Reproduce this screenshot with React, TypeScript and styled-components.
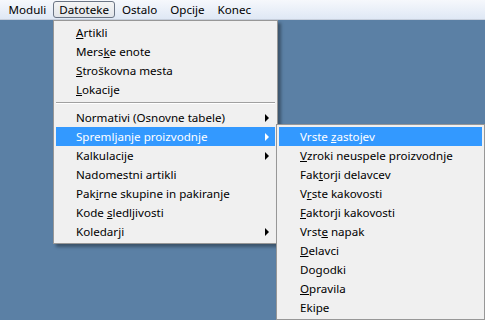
import React from 'react';
import styled, { createGlobalStyle } from 'styled-components';

const GlobalStyle = createGlobalStyle`
  html, body {
    margin: 0;
    padding: 0;
    width: 485px;
    height: 320px;
    overflow: hidden;
    background: #5b80a5;
  }
  * {
    box-sizing: border-box;
  }
`;

interface Item {
  label: string;
  key?: number;
  sub?: boolean;
  active?: boolean;
}

const mainItems: (Item | 'sep')[] = [
  { label: 'Artikli', key: 0 },
  { label: 'Merske enote', key: 4 },
  { label: 'Stroškovna mesta', key: 0 },
  { label: 'Lokacije', key: 0 },
  'sep',
  { label: 'Normativi (Osnovne tabele)', sub: true },
  { label: 'Spremljanje proizvodnje', sub: true, active: true },
  { label: 'Kalkulacije', sub: true },
  { label: 'Nadomestni artikli' },
  { label: 'Pakirne skupine in pakiranje', key: 3 },
  { label: 'Kode sledljivosti', key: 5 },
  { label: 'Koledarji', sub: true },
];

const subItems: Item[] = [
  { label: 'Vrste zastojev', key: 6, active: true },
  { label: 'Vzroki neuspele proizvodnje', key: 0 },
  { label: 'Faktorji delavcev', key: 3 },
  { label: 'Vrste kakovosti', key: 1 },
  { label: 'Faktorji kakovosti', key: 0 },
  { label: 'Vrste napak', key: 4 },
  { label: 'Delavci', key: 0 },
  { label: 'Dogodki', key: 2 },
  { label: 'Opravila', key: 0 },
  { label: 'Ekipe' },
];

const topItems = ['Moduli', 'Datoteke', 'Ostalo', 'Opcije', 'Konec'];

const Label = ({ item }: { item: Item }) => {
  if (item.key === undefined) return <>{item.label}</>;
  const { label, key } = item;
  return (
    <>
      {label.slice(0, key)}
      <u>{label[key]}</u>
      {label.slice(key + 1)}
    </>
  );
};

const App = () => {
  return (
    <Screen>
      <GlobalStyle />
      <MenuBar>
        {topItems.map((t) => (
          <TopItem key={t} open={t === 'Datoteke'}>
            {t}
          </TopItem>
        ))}
      </MenuBar>
      <Popup style={{ left: 53, top: 20, width: 225 }}>
        {mainItems.map((it, i) =>
          it === 'sep' ? (
            <Separator key={i} />
          ) : (
            <Row key={i} active={it.active}>
              <RowText>
                <Label item={it} />
              </RowText>
              {it.sub && <Arrow active={it.active} />}
            </Row>
          ),
        )}
      </Popup>
      <Popup style={{ left: 276, top: 124, width: 209 }}>
        {subItems.map((it, i) => (
          <SubRow key={i} active={it.active}>
            <RowText>
              <Label item={it} />
            </RowText>
          </SubRow>
        ))}
      </Popup>
    </Screen>
  );
};

const Screen = styled.div`
  position: relative;
  width: 485px;
  height: 320px;
  font-family: 'Noto Sans', 'Open Sans', sans-serif;
  font-size: 11.6px;
  color: #000;
`;

const MenuBar = styled.div`
  display: flex;
  align-items: center;
  height: 20px;
  padding-left: 2px;
  background: linear-gradient(#f6f8fc, #dfe8f5);
  border-bottom: 1px solid #c7cfdc;
`;

const TopItem = styled.div<{ open?: boolean }>`
  height: 17px;
  line-height: 15px;
  padding: 0 5.5px;
  border: 1px solid ${(p) => (p.open ? '#6b7585' : 'transparent')};
  border-radius: 3px;
  background: ${(p) => (p.open ? 'linear-gradient(#f4f4f4, #e2e5ea)' : 'transparent')};
`;

const Popup = styled.div`
  position: absolute;
  display: flex;
  flex-direction: column;
  padding: 2px;
  background: #f0f0f0;
  border: 1px solid #979797;
  box-shadow: 3px 3px 3px rgba(0, 0, 0, 0.35);
`;

const Row = styled.div<{ active?: boolean }>`
  position: relative;
  display: flex;
  align-items: center;
  height: 19px;
  padding-left: 20px;
  background: ${(p) => (p.active ? '#3399ff' : 'transparent')};
  color: ${(p) => (p.active ? '#fff' : '#000')};
`;

const SubRow = styled(Row)`
  padding-left: 21px;
`;

const RowText = styled.span`
  white-space: nowrap;
  line-height: 19px;
`;

const Arrow = styled.span<{ active?: boolean }>`
  position: absolute;
  right: 6px;
  top: 6px;
  width: 0;
  height: 0;
  border-top: 4px solid transparent;
  border-bottom: 4px solid transparent;
  border-left: 4px solid ${(p) => (p.active ? '#fff' : '#000')};
`;

const Separator = styled.div`
  height: 2px;
  margin: 3px 0 4px 0;
  border-top: 1px solid #a0a0a0;
  border-bottom: 1px solid #fff;
`;

export default App;
